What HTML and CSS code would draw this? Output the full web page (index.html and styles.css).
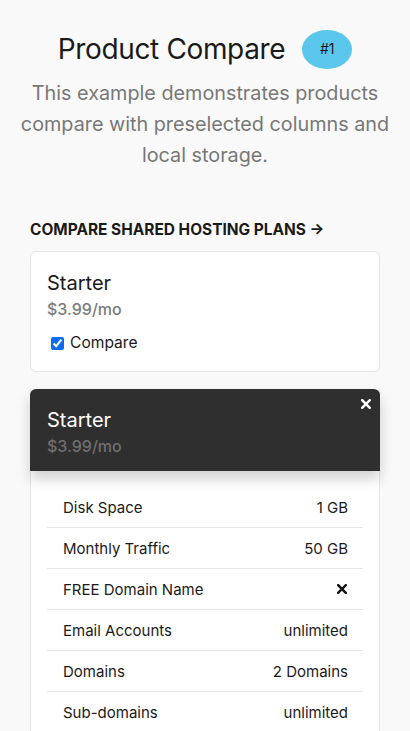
FILE: index.html
```html
<!DOCTYPE html>
<html>
<head>
<meta charset="utf-8">
<link rel="stylesheet" href="styles.css">
</head>
<body>
<header class="intro">
  <h1 class="title">Product Compare <span class="badge">#1</span></h1>
  <p class="lead">This example demonstrates products compare with preselected columns and local storage.</p>
</header>
<section class="plans">
  <h2 class="plans-heading">COMPARE SHARED HOSTING PLANS →</h2>
  <div class="plan-card">
    <div class="plan-name">Starter</div>
    <div class="plan-price">$3.99/mo</div>
    <label class="compare"><input type="checkbox" checked> Compare</label>
  </div>
  <div class="compare-col">
    <div class="compare-head">
      <div class="plan-name light">Starter</div>
      <div class="plan-price">$3.99/mo</div>
      <svg class="close" viewBox="0 0 10 10" width="10" height="10"><path d="M1.2 1.2 L8.8 8.8 M8.8 1.2 L1.2 8.8" stroke="#fff" stroke-width="2.4" stroke-linecap="square"/></svg>
    </div>
    <div class="features">
      <div class="row"><span>Disk Space</span><span>1 GB</span></div>
      <div class="row"><span>Monthly Traffic</span><span>50 GB</span></div>
      <div class="row"><span>FREE Domain Name</span><svg class="x" viewBox="0 0 10 10" width="10" height="10"><path d="M1.2 1.2 L8.8 8.8 M8.8 1.2 L1.2 8.8" stroke="#111" stroke-width="2.4" stroke-linecap="square"/></svg></div>
      <div class="row"><span>Email Accounts</span><span>unlimited</span></div>
      <div class="row"><span>Domains</span><span>2 Domains</span></div>
      <div class="row"><span>Sub-domains</span><span>unlimited</span></div>
    </div>
  </div>
</section>
</body>
</html>
```
FILE: styles.css
```css
* { box-sizing: border-box; }
html, body { margin: 0; padding: 0; }
body {
  background: #f9f9f9;
  font-family: "Inter", "Roboto", sans-serif;
  color: #222;
  width: 410px;
  overflow: hidden;
}
.intro {
  text-align: center;
  padding: 29px 15px 0;
}
.title {
  margin: 0;
  font-size: 28px;
  font-weight: 400;
  letter-spacing: -0.35px;
  line-height: 40px;
  color: #1a1a1a;
  display: flex;
  justify-content: center;
  align-items: center;
  gap: 17px;
}
.badge {
  display: inline-flex;
  align-items: center;
  justify-content: center;
  width: 50px;
  height: 39px;
  border-radius: 50%;
  background: #5bc6ec;
  font-size: 14px;
  letter-spacing: 0;
  color: #1a1a1a;
}
.lead {
  margin: 9px 0 0;
  font-size: 19.8px;
  line-height: 31px;
  color: #777;
}
.plans {
  padding: 49px 30px 0;
}
.plans-heading {
  margin: 0 0 11px;
  font-size: 15.45px;
  font-weight: 700;
  line-height: 20px;
  color: #1a1a1a;
}
.plan-card {
  background: #fff;
  border: 1px solid #e6e6e6;
  border-radius: 6px;
  padding: 18px 16px 17px;
}
.plan-name {
  font-size: 20px;
  line-height: 26px;
  color: #1a1a1a;
}
.plan-name.light { color: #fff; }
.plan-price {
  font-size: 16px;
  line-height: 27px;
  font-weight: 500;
  color: #7a7a7a;
}
.compare {
  display: flex;
  align-items: center;
  gap: 6px;
  margin-top: 9px;
  padding-left: 4px;
  font-size: 15.6px;
  line-height: 22px;
  color: #1a1a1a;
}
.compare input {
  margin: 0;
  width: 13px;
  height: 13px;
  accent-color: #0a6cf0;
}
.compare-col {
  margin-top: 17px;
  background: #fff;
  border: 1px solid #e6e6e6;
  border-top: none;
  border-bottom: none;
}
.compare-head {
  position: relative;
  background: #2f2f2f;
  border-radius: 6px 6px 0 0;
  margin: 0 -1px;
  padding: 18px 17px 10px;
  height: 82px;
  box-shadow: 0 8px 14px rgba(0,0,0,0.18);
}
.compare-head .plan-price { color: #6f6f6f; }
.close {
  position: absolute;
  top: 10px;
  right: 9px;
}
.features {
  padding: 16px 16px 0;
}
.row {
  display: flex;
  justify-content: space-between;
  align-items: center;
  height: 41px;
  padding: 0 15px 0 16px;
  border-bottom: 1px solid #e6e6e6;
  font-size: 15px;
  color: #1a1a1a;
}
.row .x { margin-right: 1px; }
```
